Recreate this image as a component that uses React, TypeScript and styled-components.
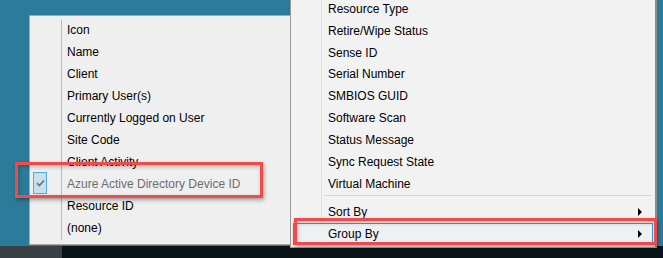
import React from 'react';
import styled, { createGlobalStyle } from 'styled-components';

const GlobalStyle = createGlobalStyle`
    html, body {
        margin: 0;
        padding: 0;
        background: #2c7b9b;
        overflow: hidden;
    }
    body {
        font-family: 'Liberation Sans', Arial, sans-serif;
        font-size: 12px;
        color: #000;
    }
`;

const Screen = styled.div`
    position: relative;
    width: 663px;
    height: 258px;
    display: flex;
    flex-direction: column;
    overflow: hidden;
`;

const Desktop = styled.div`
    flex: 1;
    display: flex;
    flex-direction: row;
    padding-left: 29px;
    min-height: 0;
`;

const Taskbar = styled.div`
    height: 12px;
    display: flex;
    flex-direction: row;
`;

const TaskbarStart = styled.div`
    width: 62px;
    background: #3a4144;
`;

const TaskbarRest = styled.div`
    flex: 1;
    background: #0a1418;
`;

const Menu = styled.div`
    display: flex;
    flex-direction: column;
    position: relative;
    box-sizing: border-box;
`;

const SubMenu = styled(Menu)`
    margin-top: 15px;
    width: 261px;
    height: 230px;
    padding: 3px 2px;
    background: #efefef;
    border: 1px solid #a6a6a6;
    border-right: none;
    background-image: linear-gradient(#b9b9b9, #b9b9b9);
    background-size: 1px calc(100% - 8px);
    background-position: 31px 4px;
    background-repeat: no-repeat;
`;

const MainMenu = styled(Menu)`
    margin-top: -2px;
    width: 367px;
    height: 250px;
    padding: 0 2px 2px 2px;
    background: #f2f2f2;
    border-left: 1px solid #9a9a9a;
    border-right: 2px solid #8e8e8e;
    border-bottom: 1px solid #a0a0a0;
    background-image: linear-gradient(#e0e0e0, #e0e0e0);
    background-size: 1px 100%;
    background-position: 30px 0;
    background-repeat: no-repeat;
`;

const Item = styled.div<{ $gutter: number; $disabled?: boolean; $hover?: boolean }>`
    position: relative;
    height: 22px;
    display: flex;
    align-items: center;
    box-sizing: border-box;
    padding-left: ${p => p.$gutter}px;
    padding-right: 10px;
    color: ${p => (p.$disabled ? '#6d6d6d' : '#000')};
    white-space: nowrap;
    border: 1px solid ${p => (p.$hover ? '#3d9ad6' : 'transparent')};
    background: ${p => (p.$hover ? '#eef1f4' : 'transparent')};
`;

const Label = styled.span`
    flex: 1;
`;

const Arrow = styled.span`
    width: 0;
    height: 0;
    border-top: 4px solid transparent;
    border-bottom: 4px solid transparent;
    border-left: 4px solid #000;
`;

const Separator = styled.div`
    height: 7px;
    margin-left: 31px;
    margin-right: 2px;
    display: flex;
    align-items: flex-start;
    padding-top: 1px;
    box-sizing: border-box;
    &::after {
        content: '';
        flex: 1;
        height: 1px;
        background: #d7d7d7;
    }
`;

const CheckBox = styled.span`
    position: absolute;
    left: 0;
    top: -2px;
    width: 14px;
    height: 22px;
    box-sizing: border-box;
    background: #c6e0f1;
    border: 1px solid #5aa7dc;
    display: flex;
    align-items: center;
    justify-content: center;
`;

const Callout = styled.div<{ $x: number; $y: number; $w: number; $h: number }>`
    position: absolute;
    left: ${p => p.$x}px;
    top: ${p => p.$y}px;
    width: ${p => p.$w}px;
    height: ${p => p.$h}px;
    box-sizing: border-box;
    border: 3px solid #f04a4a;
    box-shadow: 1px 2px 4px rgba(0, 0, 0, 0.35),
        inset 1px 2px 4px rgba(0, 0, 0, 0.22);
    pointer-events: none;
`;

const groupItems = [
    'Icon',
    'Name',
    'Client',
    'Primary User(s)',
    'Currently Logged on User',
    'Site Code',
    'Client Activity',
    'Azure Active Directory Device ID',
    'Resource ID',
    '(none)',
];

const columnItems = [
    'Resource Type',
    'Retire/Wipe Status',
    'Sense ID',
    'Serial Number',
    'SMBIOS GUID',
    'Software Scan',
    'Status Message',
    'Sync Request State',
    'Virtual Machine',
];

const Check = () => (
    <svg width="9" height="8" viewBox="0 0 9 8">
        <path d="M1 4.2 L3.4 6.5 L8 1.5" fill="none" stroke="#707070" strokeWidth="1.7" />
    </svg>
);

const App = () => {
    const checked = 'Azure Active Directory Device ID';

    return (
        <Screen>
            <GlobalStyle />
            <Desktop>
                <SubMenu>
                    {groupItems.map(item => (
                        <Item key={item} $gutter={34} $disabled={item === checked}>
                            {item === checked && (
                                <CheckBox>
                                    <Check />
                                </CheckBox>
                            )}
                            <Label>{item}</Label>
                        </Item>
                    ))}
                </SubMenu>
                <MainMenu>
                    {columnItems.map(item => (
                        <Item key={item} $gutter={34}>
                            <Label>{item}</Label>
                        </Item>
                    ))}
                    <Separator />
                    <Item $gutter={34}>
                        <Label>Sort By</Label>
                        <Arrow />
                    </Item>
                    <Item $gutter={34} $hover>
                        <Label>Group By</Label>
                        <Arrow />
                    </Item>
                </MainMenu>
            </Desktop>
            <Taskbar>
                <TaskbarStart />
                <TaskbarRest />
            </Taskbar>
            <Callout $x={15} $y={162} $w={248} $h={36} />
            <Callout $x={294} $y={218} $w={363} $h={27} />
        </Screen>
    );
};

export default App;
